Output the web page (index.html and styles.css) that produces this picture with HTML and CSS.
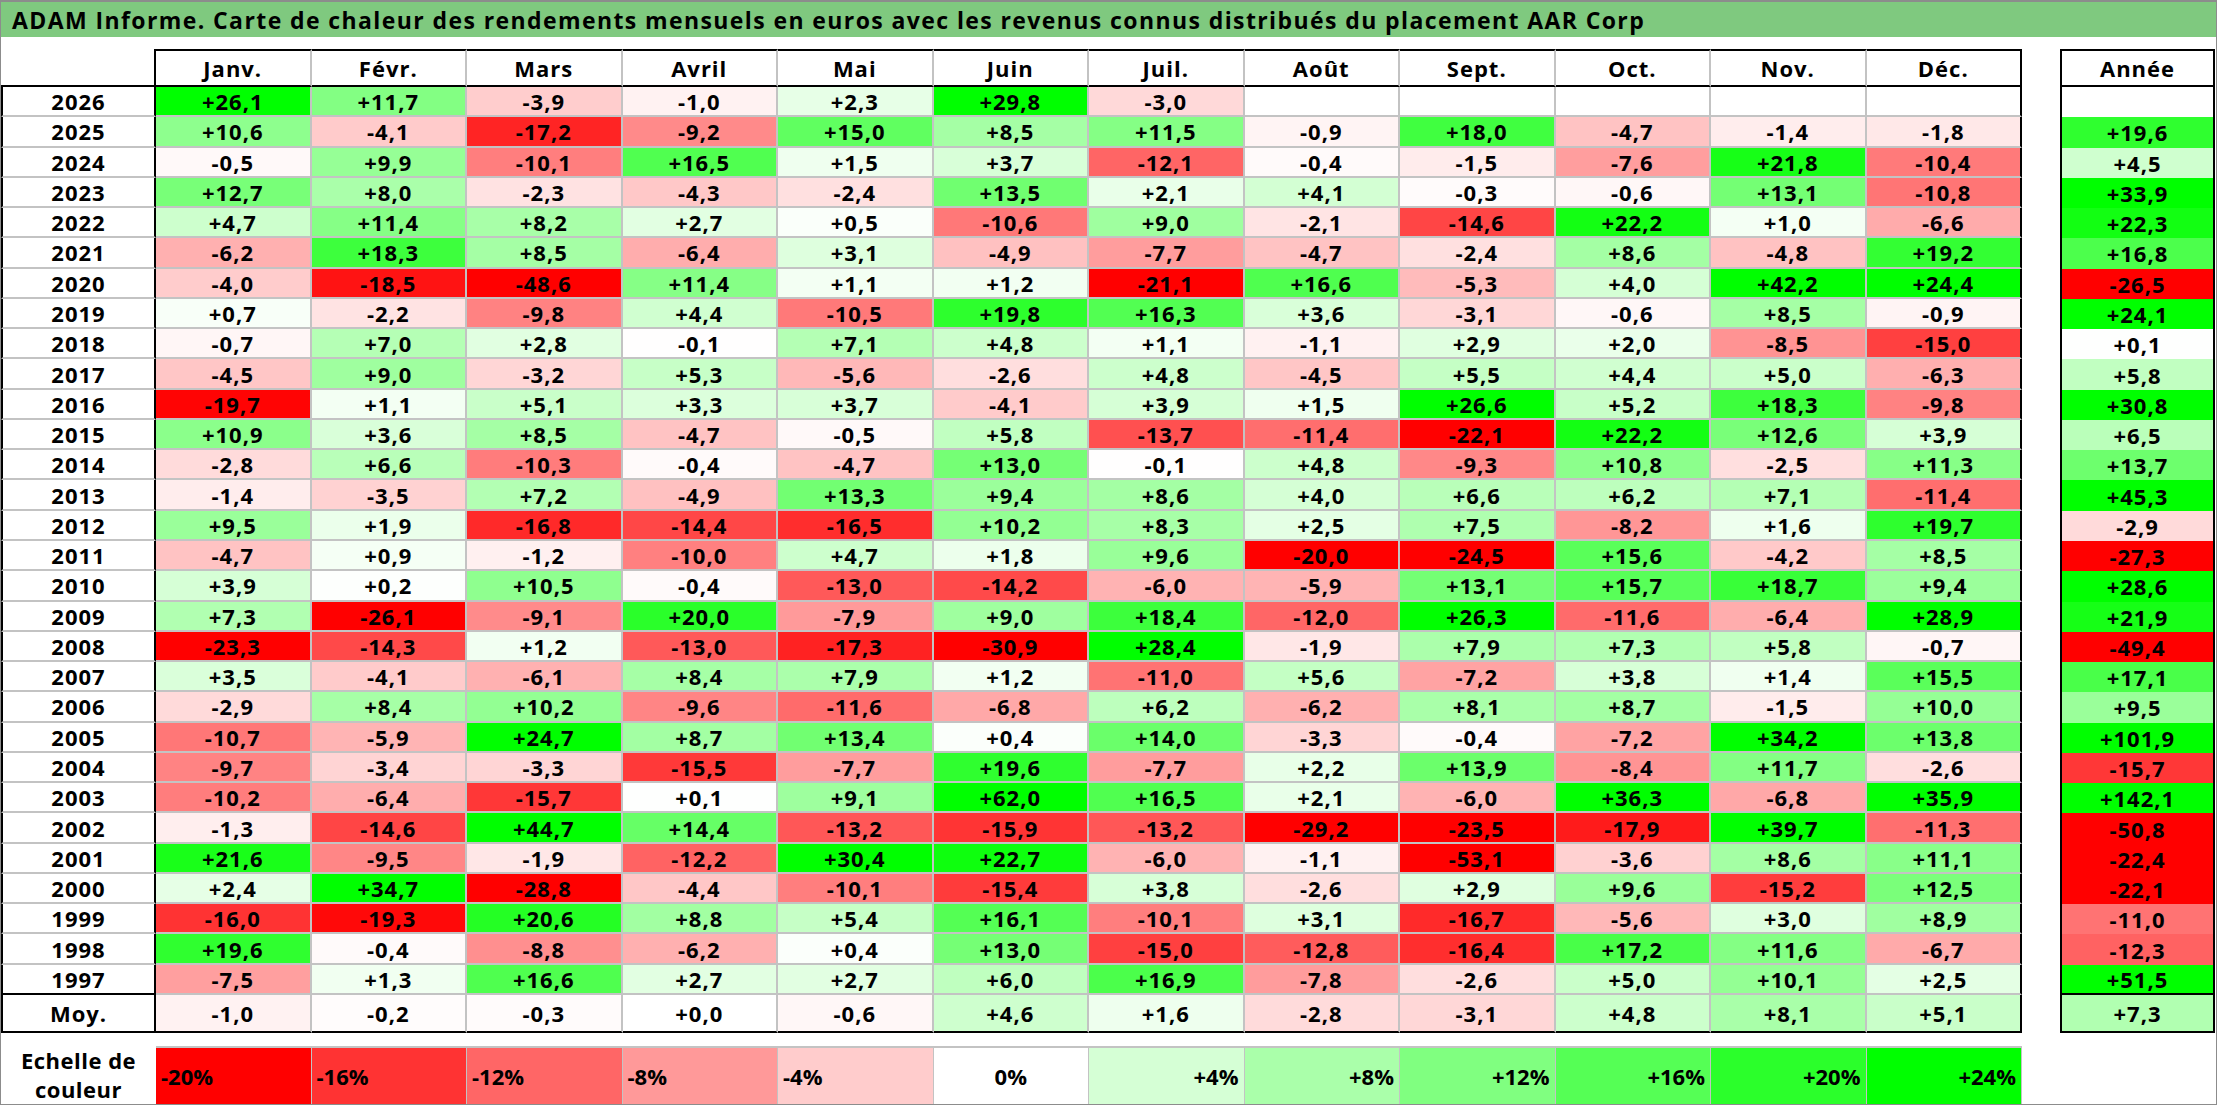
FILE: index.html
```html
<!DOCTYPE html>
<html lang="fr">
<head>
<meta charset="utf-8">
<title>ADAM Informe - AAR Corp</title>
<link rel="stylesheet" href="styles.css">
</head>
<body>
<div class="frame">
  <div class="title">ADAM Informe. Carte de chaleur des rendements mensuels en euros avec les revenus connus distribués du placement AAR Corp</div>
  <div class="tables">
    <div class="grid grid-main" id="main"></div>
    <div class="grid grid-year" id="annee"></div>
  </div>
  <div class="scale">
    <div class="scale-label">Echelle de<br>couleur</div>
    <div class="sc neg" style="background:rgb(255,0,0)">-20%</div>
    <div class="sc neg" style="background:rgb(255,51,51)">-16%</div>
    <div class="sc neg" style="background:rgb(255,102,102)">-12%</div>
    <div class="sc neg" style="background:rgb(255,153,153)">-8%</div>
    <div class="sc neg" style="background:rgb(255,204,204)">-4%</div>
    <div class="sc zero" style="background:#ffffff">0%</div>
    <div class="sc pos" style="background:rgb(213,255,213)">+4%</div>
    <div class="sc pos" style="background:rgb(170,255,170)">+8%</div>
    <div class="sc pos" style="background:rgb(128,255,128)">+12%</div>
    <div class="sc pos" style="background:rgb(85,255,85)">+16%</div>
    <div class="sc pos" style="background:rgb(43,255,43)">+20%</div>
    <div class="sc pos" style="background:rgb(0,255,0)">+24%</div>
  </div>
</div>
<script src="app.js"></script>
</body>
</html>
```

FILE: styles.css
```css
* { box-sizing: border-box; }
html, body { margin: 0; padding: 0; background: #ffffff; }
body {
  font-family: "Open Sans", "Liberation Sans", sans-serif;
  font-weight: 700;
  color: #000000;
}
.frame {
  width: 2217px;
  height: 1105px;
  border: 1px solid #8c8c8c;
  border-top-width: 2px;
  display: flex;
  flex-direction: column;
  overflow: hidden;
}
.title {
  height: 35px;
  flex: none;
  background: #7fc97f;
  font-size: 23px;
  letter-spacing: 1.4px;
  padding-left: 11px;
  display: flex;
  align-items: center;
  white-space: nowrap;
}
.tables {
  display: flex;
  gap: 38px;
  margin-top: 12px;
  align-items: flex-start;
  flex: none;
}
.grid {
  display: grid;
  grid-template-rows: 38px repeat(30, 30.27px) 38px;
}
.grid-main { grid-template-columns: 155px repeat(12, 155.5px); }
.grid-year { grid-template-columns: 155px; }

.c {
  display: flex;
  align-items: center;
  justify-content: center;
  font-size: 22px;
  letter-spacing: 1px;
  white-space: nowrap;
  border-right: 2px solid #c3c3c3;
  border-bottom: 2px solid #c3c3c3;
  background: #ffffff;
}
.corner {
  border-right-color: #000;
  border-bottom-color: #000;
}
.head {
  border-top: 2px solid #000;
  border-bottom-color: #000;
}
.head.last { border-right-color: #000; }
.yr {
  border-left: 2px solid #000;
  border-right-color: #000;
}
.yr.end { border-bottom-color: #000; }
.val.last { border-right-color: #000; }
.moy { border-bottom-color: #000; }

.yhead {
  border: 2px solid #000;
}
.ya {
  border-left: 2px solid #000;
  border-right: 2px solid #000;
  border-bottom: none;
}
.ya.end { border-bottom: 2px solid #000; }
.ya.moy { border-bottom: 2px solid #000; }

.scale {
  display: grid;
  grid-template-columns: 155px repeat(12, 155.5px);
  height: 58px;
  margin-top: 13px;
  flex: none;
}
.scale-label {
  font-size: 22px;
  line-height: 29px;
  letter-spacing: 0.5px;
  text-align: center;
  display: flex;
  align-items: center;
  justify-content: center;
}
.sc {
  display: flex;
  align-items: center;
  font-size: 22px;
  border-top: 2px solid #c3c3c3;
  border-right: 1px solid #c3c3c3;
  padding: 0 5px;
}
.sc.neg { justify-content: flex-start; }
.sc.zero { justify-content: center; }
.sc.pos { justify-content: flex-end; }
```

FILE: app.js
```js
var months = ["Janv.", "Févr.", "Mars", "Avril", "Mai", "Juin", "Juil.", "Août", "Sept.", "Oct.", "Nov.", "Déc."];

var rows = [
  "2026 +26,1 +11,7 -3,9 -1,0 +2,3 +29,8 -3,0 . . . . . .",
  "2025 +10,6 -4,1 -17,2 -9,2 +15,0 +8,5 +11,5 -0,9 +18,0 -4,7 -1,4 -1,8 +19,6",
  "2024 -0,5 +9,9 -10,1 +16,5 +1,5 +3,7 -12,1 -0,4 -1,5 -7,6 +21,8 -10,4 +4,5",
  "2023 +12,7 +8,0 -2,3 -4,3 -2,4 +13,5 +2,1 +4,1 -0,3 -0,6 +13,1 -10,8 +33,9",
  "2022 +4,7 +11,4 +8,2 +2,7 +0,5 -10,6 +9,0 -2,1 -14,6 +22,2 +1,0 -6,6 +22,3",
  "2021 -6,2 +18,3 +8,5 -6,4 +3,1 -4,9 -7,7 -4,7 -2,4 +8,6 -4,8 +19,2 +16,8",
  "2020 -4,0 -18,5 -48,6 +11,4 +1,1 +1,2 -21,1 +16,6 -5,3 +4,0 +42,2 +24,4 -26,5",
  "2019 +0,7 -2,2 -9,8 +4,4 -10,5 +19,8 +16,3 +3,6 -3,1 -0,6 +8,5 -0,9 +24,1",
  "2018 -0,7 +7,0 +2,8 -0,1 +7,1 +4,8 +1,1 -1,1 +2,9 +2,0 -8,5 -15,0 +0,1",
  "2017 -4,5 +9,0 -3,2 +5,3 -5,6 -2,6 +4,8 -4,5 +5,5 +4,4 +5,0 -6,3 +5,8",
  "2016 -19,7 +1,1 +5,1 +3,3 +3,7 -4,1 +3,9 +1,5 +26,6 +5,2 +18,3 -9,8 +30,8",
  "2015 +10,9 +3,6 +8,5 -4,7 -0,5 +5,8 -13,7 -11,4 -22,1 +22,2 +12,6 +3,9 +6,5",
  "2014 -2,8 +6,6 -10,3 -0,4 -4,7 +13,0 -0,1 +4,8 -9,3 +10,8 -2,5 +11,3 +13,7",
  "2013 -1,4 -3,5 +7,2 -4,9 +13,3 +9,4 +8,6 +4,0 +6,6 +6,2 +7,1 -11,4 +45,3",
  "2012 +9,5 +1,9 -16,8 -14,4 -16,5 +10,2 +8,3 +2,5 +7,5 -8,2 +1,6 +19,7 -2,9",
  "2011 -4,7 +0,9 -1,2 -10,0 +4,7 +1,8 +9,6 -20,0 -24,5 +15,6 -4,2 +8,5 -27,3",
  "2010 +3,9 +0,2 +10,5 -0,4 -13,0 -14,2 -6,0 -5,9 +13,1 +15,7 +18,7 +9,4 +28,6",
  "2009 +7,3 -26,1 -9,1 +20,0 -7,9 +9,0 +18,4 -12,0 +26,3 -11,6 -6,4 +28,9 +21,9",
  "2008 -23,3 -14,3 +1,2 -13,0 -17,3 -30,9 +28,4 -1,9 +7,9 +7,3 +5,8 -0,7 -49,4",
  "2007 +3,5 -4,1 -6,1 +8,4 +7,9 +1,2 -11,0 +5,6 -7,2 +3,8 +1,4 +15,5 +17,1",
  "2006 -2,9 +8,4 +10,2 -9,6 -11,6 -6,8 +6,2 -6,2 +8,1 +8,7 -1,5 +10,0 +9,5",
  "2005 -10,7 -5,9 +24,7 +8,7 +13,4 +0,4 +14,0 -3,3 -0,4 -7,2 +34,2 +13,8 +101,9",
  "2004 -9,7 -3,4 -3,3 -15,5 -7,7 +19,6 -7,7 +2,2 +13,9 -8,4 +11,7 -2,6 -15,7",
  "2003 -10,2 -6,4 -15,7 +0,1 +9,1 +62,0 +16,5 +2,1 -6,0 +36,3 -6,8 +35,9 +142,1",
  "2002 -1,3 -14,6 +44,7 +14,4 -13,2 -15,9 -13,2 -29,2 -23,5 -17,9 +39,7 -11,3 -50,8",
  "2001 +21,6 -9,5 -1,9 -12,2 +30,4 +22,7 -6,0 -1,1 -53,1 -3,6 +8,6 +11,1 -22,4",
  "2000 +2,4 +34,7 -28,8 -4,4 -10,1 -15,4 +3,8 -2,6 +2,9 +9,6 -15,2 +12,5 -22,1",
  "1999 -16,0 -19,3 +20,6 +8,8 +5,4 +16,1 -10,1 +3,1 -16,7 -5,6 +3,0 +8,9 -11,0",
  "1998 +19,6 -0,4 -8,8 -6,2 +0,4 +13,0 -15,0 -12,8 -16,4 +17,2 +11,6 -6,7 -12,3",
  "1997 -7,5 +1,3 +16,6 +2,7 +2,7 +6,0 +16,9 -7,8 -2,6 +5,0 +10,1 +2,5 +51,5",
  "Moy. -1,0 -0,2 -0,3 +0,0 -0,6 +4,6 +1,6 -2,8 -3,1 +4,8 +8,1 +5,1 +7,3"
];

function color(s) {
  if (s === ".") return "#ffffff";
  var v = parseFloat(s.replace(",", "."));
  var t, g;
  if (v >= 0) {
    t = Math.min(v / 24, 1);
    g = Math.round(255 * (1 - t));
    return "rgb(" + g + ",255," + g + ")";
  }
  t = Math.min(-v / 20, 1);
  g = Math.round(255 * (1 - t));
  return "rgb(255," + g + "," + g + ")";
}

var main = document.getElementById("main");
var annee = document.getElementById("annee");

function cell(parent, text, cls, bg) {
  var d = document.createElement("div");
  d.className = "c " + cls;
  d.textContent = text;
  if (bg) d.style.background = bg;
  parent.appendChild(d);
}

cell(main, "", "corner");
months.forEach(function (m, i) {
  cell(main, m, "head" + (i === 11 ? " last" : ""));
});
cell(annee, "Année", "yhead");

rows.forEach(function (r, ri) {
  var p = r.split(" ");
  var extra = "";
  if (ri === rows.length - 2) extra = " end";
  if (ri === rows.length - 1) extra = " moy";
  cell(main, p[0], "yr" + extra);
  for (var i = 1; i <= 12; i++) {
    var s = p[i];
    cell(main, s === "." ? "" : s, "val" + (i === 12 ? " last" : "") + (ri === rows.length - 1 ? " moy" : ""), color(s));
  }
  var a = p[13];
  cell(annee, a === "." ? "" : a, "ya" + extra, color(a));
});
```
